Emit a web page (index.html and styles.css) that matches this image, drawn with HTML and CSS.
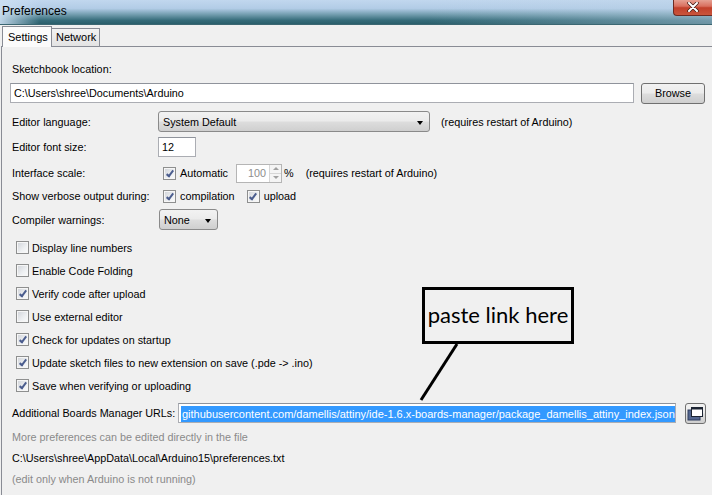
FILE: index.html
```html
<!doctype html>
<html lang="en">
<head>
<meta charset="utf-8">
<title>Preferences</title>
<link rel="stylesheet" href="styles.css">
</head>
<body>

<div class="window">

  <div class="titlebar">
    <span class="title">Preferences</span>
    <span class="close">
      <svg width="12" height="10" viewBox="0 0 12 10">
        <path d="M2 1 L10 9 M10 1 L2 9" stroke="#3a1a14" stroke-width="3.4" stroke-linecap="round"/>
        <path d="M2 1 L10 9 M10 1 L2 9" stroke="#fff" stroke-width="2" stroke-linecap="round"/>
      </svg>
    </span>
  </div>

  <div class="tabs">
    <span class="tab active">Settings</span>
    <span class="tab">Network</span>
  </div>

  <div class="panel">

    <div class="row sketch-label"><span class="txt">Sketchbook location:</span></div>
    <div class="row sketch-path">
      <div class="textbox sketch-box">C:\Users\shree\Documents\Arduino</div>
      <span class="btn browse">Browse</span>
    </div>

    <div class="row field lang-row">
      <span class="name">Editor language:</span>
      <div class="combo lang">System Default <i class="arrow"></i></div>
      <span class="note">(requires restart of Arduino)</span>
    </div>

    <div class="row field size-row">
      <span class="name">Editor font size:</span>
      <div class="textbox size-box">12</div>
    </div>

    <div class="row field scale-row">
      <span class="name">Interface scale:</span>
      <span class="cb on first"></span><span class="cb-text">Automatic</span>
      <div class="spinner">
        <span class="spin-val">100</span>
        <span class="spin-btns"><i class="up"></i><i class="down"></i></span>
      </div>
      <span class="pct">%</span>
      <span class="note scale-note">(requires restart of Arduino)</span>
    </div>

    <div class="row field verbose-row">
      <span class="name">Show verbose output during:</span>
      <span class="cb on first"></span><span class="cb-text">compilation</span>
      <span class="cb on second"></span><span class="cb-text">upload</span>
    </div>

    <div class="row field warn-row">
      <span class="name">Compiler warnings:</span>
      <div class="combo warn">None <i class="arrow"></i></div>
    </div>

    <div class="options">
      <div class="opt"><span class="cb"></span><span class="cb-text">Display line numbers</span></div>
      <div class="opt"><span class="cb"></span><span class="cb-text">Enable Code Folding</span></div>
      <div class="opt"><span class="cb on"></span><span class="cb-text">Verify code after upload</span></div>
      <div class="opt"><span class="cb"></span><span class="cb-text">Use external editor</span></div>
      <div class="opt"><span class="cb on"></span><span class="cb-text">Check for updates on startup</span></div>
      <div class="opt"><span class="cb on"></span><span class="cb-text">Update sketch files to new extension on save (.pde -&gt; .ino)</span></div>
      <div class="opt"><span class="cb on"></span><span class="cb-text">Save when verifying or uploading</span></div>
    </div>

    <div class="row field url-row">
      <span class="name url-name">Additional Boards Manager URLs:</span>
      <div class="textbox url-box"><span class="selected">githubusercontent.com/damellis/attiny/ide-1.6.x-boards-manager/package_damellis_attiny_index.json</span></div>
      <span class="btn icon-btn">
        <svg width="17" height="15" viewBox="0 0 17 15">
          <rect x="1" y="4" width="12" height="10" fill="#54668f" stroke="#2f3d5e" stroke-width="1"/>
          <rect x="4.5" y="1.5" width="11" height="9" fill="#fff" stroke="#1c2433" stroke-width="1"/>
          <rect x="4.5" y="1.5" width="11" height="2" fill="#1c2433"/>
        </svg>
      </span>
    </div>

    <div class="row foot muted">More preferences can be edited directly in the file</div>
    <div class="row foot">C:\Users\shree\AppData\Local\Arduino15\preferences.txt</div>
    <div class="row foot muted">(edit only when Arduino is not running)</div>

  </div>

  <!-- hand-drawn annotation on top of the dialog -->
  <div class="callout">paste link here</div>
  <svg class="pointer" width="60" height="70" viewBox="0 0 60 70">
    <path d="M46 2 L10 58" stroke="#000" stroke-width="3"/>
  </svg>

</div>

</body>
</html>
```

FILE: styles.css
```css
body {
  margin: 0;
}

.window {
  background: #f0f0f0;
  color: #000;
  font: 10.8px "Liberation Sans", Arial, sans-serif;
  height: 495px;
  overflow: hidden;
  position: relative;
  width: 712px;
}

/* title bar */

.titlebar {
  align-items: flex-start;
  background:
    linear-gradient(to right, rgba(205, 224, 243, 0.9) 0, rgba(205, 224, 243, 0) 40px),
    linear-gradient(to right, rgba(190, 212, 232, 0) 60%, rgba(190, 212, 232, 0.45) 100%),
    linear-gradient(to bottom, #c1d7ee 0, #b2cce6 35%, #6f9aab 62%, #356b79 85%, #2a5e6b 100%);
  border-bottom: 1px solid #3b6772;
  display: flex;
  height: 24px;
  justify-content: space-between;
}

.titlebar .title {
  font-size: 12px;
  line-height: 22px;
  padding-left: 2px;
}

.titlebar .close {
  align-items: center;
  background: linear-gradient(to bottom, #e7a89b 0, #d9705f 45%, #c2402b 55%, #c9553c 100%);
  border: 1px solid #6d2b22;
  border-radius: 0 0 0 4px;
  border-right: none;
  border-top: none;
  box-sizing: border-box;
  display: flex;
  height: 17px;
  justify-content: center;
  margin-top: -1px;
  width: 39px;
}

/* tabs */

.tabs {
  align-items: flex-end;
  display: flex;
  font-size: 11px;
  height: 21px;
  padding-left: 2px;
  position: relative;
  z-index: 1;
}

.tab {
  background: linear-gradient(to bottom, #f3f3f3, #e3e3e3);
  border: 1px solid #898c95;
  border-bottom: none;
  border-left: none;
  box-sizing: border-box;
  height: 18px;
  line-height: 17px;
  padding: 0 4px;
}

.tab.active {
  background: #fbfbfb;
  border-left: 1px solid #898c95;
  height: 21px;
  line-height: 20px;
  margin-bottom: -1px;
  padding: 0 6px 0 5px;
  width: 50px;
}

.tab.active + .tab {
  width: 48px;
}

/* settings panel */

.panel {
  border-left: 1px solid #898c95;
  border-top: 1px solid #898c95;
  height: 460px;
  margin-left: 1px;
  padding-left: 8px;
}

.row {
  align-items: center;
  display: flex;
  white-space: nowrap;
}

.sketch-label {
  height: 16px;
  margin-top: 14px;
  padding-left: 2px;
}

.sketch-path {
  height: 20px;
  margin-top: 6px;
}

.textbox {
  background: #fff;
  border: 1px solid #abadb3;
  border-top-color: #8f939b;
  box-sizing: border-box;
  height: 20px;
  line-height: 18px;
  overflow: hidden;
  padding-left: 3px;
}

.sketch-box {
  width: 624px;
}

.btn {
  align-items: center;
  background: linear-gradient(to bottom, #f2f2f2 0, #ebebeb 48%, #dddddd 52%, #cfcfcf 100%);
  border: 1px solid #707070;
  border-radius: 3px;
  box-sizing: border-box;
  display: flex;
  height: 21px;
  justify-content: center;
}

.browse {
  margin-left: 7px;
  width: 64px;
}

.field .name {
  box-sizing: border-box;
  flex: none;
  padding-left: 2px;
  width: 148px;
}

.lang-row {
  height: 21px;
  margin-top: 8px;
}

.combo {
  align-items: center;
  background: linear-gradient(to bottom, #f2f2f2 0, #ebebeb 48%, #dddddd 52%, #cfcfcf 100%);
  border: 1px solid #8a8a8a;
  border-radius: 3px;
  box-sizing: border-box;
  display: flex;
  height: 21px;
  padding-left: 4px;
  position: relative;
}

.combo .arrow {
  border-left: 3.5px solid transparent;
  border-right: 3.5px solid transparent;
  border-top: 4px solid #000;
  margin-left: auto;
  margin-right: 6px;
  margin-top: 2px;
}

.combo.lang {
  width: 272px;
}

.note {
  margin-left: 11px;
}

.size-row {
  height: 20px;
  margin-top: 5px;
}

.size-box {
  width: 38px;
}

.scale-row {
  height: 20px;
  margin-top: 6px;
}

.cb {
  background: linear-gradient(135deg, #cfd2d8 0, #eef0f2 60%, #fbfbfb 100%);
  border: 1px solid #8e8f8f;
  box-shadow: inset 0 0 0 1px #f6f6f6;
  box-sizing: border-box;
  flex: none;
  height: 13px;
  position: relative;
  width: 13px;
}

.cb.on::after {
  border: solid #4b5d8e;
  border-width: 0 2px 2px 0;
  content: '';
  height: 6px;
  left: 3.5px;
  position: absolute;
  top: 1px;
  transform: rotate(38deg);
  width: 2px;
}

.cb-text {
  margin-left: 4px;
}

.cb.first {
  margin-left: 5px;
}

.spinner {
  background: #fff;
  border: 1px solid #b5b5b5;
  box-sizing: border-box;
  display: flex;
  height: 19px;
  margin-left: 8px;
  width: 46px;
}

.spin-val {
  color: #8d8d8d;
  flex: 1;
  line-height: 17px;
  padding-right: 3px;
  text-align: right;
}

.spin-btns {
  border-left: 1px solid #d6d6d6;
  display: flex;
  flex-direction: column;
  width: 11px;
}

.spin-btns i {
  align-items: center;
  background: #f4f4f4;
  display: flex;
  flex: 1;
  justify-content: center;
}

.spin-btns .up {
  border-bottom: 1px solid #d6d6d6;
}

.spin-btns .up::after,
.spin-btns .down::after {
  border-left: 3px solid transparent;
  border-right: 3px solid transparent;
  content: '';
}

.spin-btns .up::after {
  border-bottom: 3px solid #a0a0a0;
}

.spin-btns .down::after {
  border-top: 3px solid #a0a0a0;
}

.pct {
  margin-left: 2px;
}

.scale-note {
  margin-left: 12px;
}

.verbose-row {
  height: 20px;
  margin-top: 3px;
}

.cb.second {
  margin-left: 12px;
}

.warn-row {
  height: 21px;
  margin-top: 3px;
}

.combo.warn {
  margin-left: 1px;
  width: 59px;
}

.options {
  margin-top: 6px;
}

.opt {
  align-items: center;
  display: flex;
  height: 23px;
  padding-left: 6px;
  white-space: nowrap;
}

.opt .cb-text {
  margin-left: 3px;
}

.url-row {
  height: 20px;
  margin-top: 6px;
}

.field .url-name {
  width: 168px;
}

.url-box {
  padding-left: 2px;
  padding-top: 1px;
  width: 498px;
}

.url-box .selected {
  background: #3399ff;
  color: #fff;
  display: inline-block;
  font-size: 11px;
  line-height: 16px;
  padding: 0 1px;
}

.icon-btn {
  margin-left: 9px;
  width: 21px;
}

.foot {
  height: 16px;
  margin-top: 5px;
  padding-left: 2px;
}

.url-row + .foot {
  margin-top: 6px;
}

.foot.muted {
  color: #8a8a8a;
}

/* annotation */

.callout {
  align-items: center;
  background: #f0f0f0;
  border: 3px solid #000;
  box-sizing: border-box;
  display: flex;
  font: 22px Lato, "Open Sans", sans-serif;
  height: 57px;
  justify-content: center;
  left: 422px;
  padding-bottom: 2px;
  position: absolute;
  top: 287px;
  width: 152px;
}

.pointer {
  left: 411px;
  position: absolute;
  top: 342px;
}
```
